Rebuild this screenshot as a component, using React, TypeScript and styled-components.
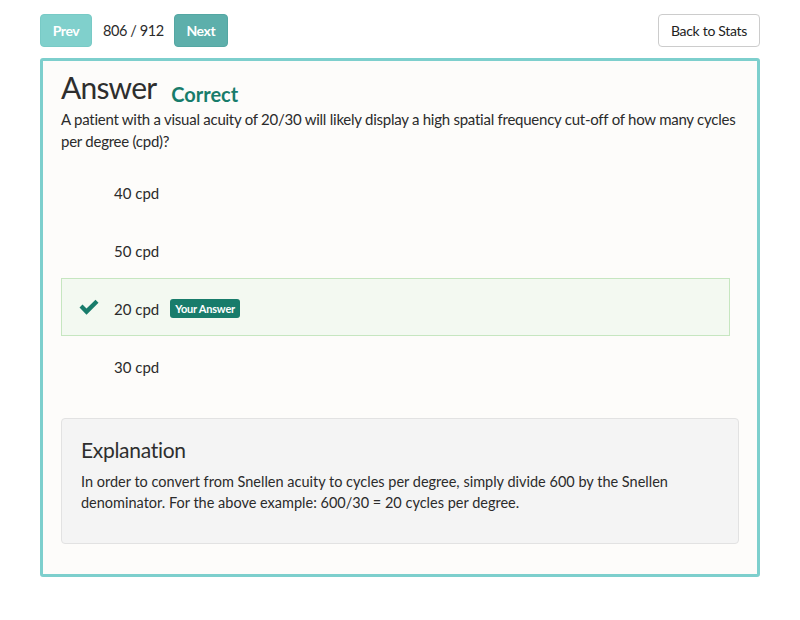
import React from "react";
import styled, { createGlobalStyle } from "styled-components";

const Global = createGlobalStyle`
  html, body { margin: 0; padding: 0; background: #ffffff; }
  body { font-family: Lato, "Open Sans", sans-serif; color: #2b2b2b; }
  * { box-sizing: border-box; }
`;

const Page = styled.div`
  width: 800px;
  padding: 14px 40px 0 40px;
`;

const Toolbar = styled.div`
  display: flex;
  align-items: center;
  height: 33px;
  margin-bottom: 11px;
`;

const NavButton = styled.button<{ $dark?: boolean; $w: number }>`
  width: ${(p) => p.$w}px;
  height: 33px;
  padding: 0;
  border: 1px solid ${(p) => (p.$dark ? "#54a7a3" : "#78cac6")};
  border-radius: 4px;
  background: ${(p) => (p.$dark ? "#5dafab" : "#80d0cc")};
  color: #fff;
  font-family: Lato, sans-serif;
  font-weight: 700;
  font-size: 14px;
  letter-spacing: -0.4px;
`;

const Counter = styled.span`
  font-size: 14.5px;
  letter-spacing: -0.4px;
  margin: 0 10px 0 11px;
  color: #2b2b2b;
`;

const Spacer = styled.div`
  flex: 1;
`;

const BackButton = styled.button`
  width: 102px;
  height: 33px;
  padding: 0;
  border: 1px solid #cccccc;
  border-radius: 4px;
  background: #fff;
  color: #222;
  font-family: Lato, sans-serif;
  font-size: 14px;
  letter-spacing: -0.3px;
`;

const Card = styled.div`
  border: 3px solid #7dcfcd;
  border-radius: 3px;
  background: #fdfcfa;
  padding: 7px 18px 31px 18px;
  height: 519px;
`;

const TitleRow = styled.div`
  display: flex;
  align-items: baseline;
`;

const Title = styled.h1`
  margin: 0;
  font-size: 30px;
  font-weight: 400;
  letter-spacing: -0.8px;
  color: #2e2e2e;
  line-height: 38px;
`;

const Status = styled.span`
  font-size: 20px;
  font-weight: 700;
  color: #187c6b;
  margin-left: 15px;
  position: relative;
  top: 3px;
`;

const Question = styled.p`
  margin: 2px 0 0 0;
  font-size: 15px;
  letter-spacing: -0.25px;
  line-height: 22px;
  color: #2b2b2b;
`;

const Options = styled.div`
  display: flex;
  flex-direction: column;
  margin-top: 10px;
  width: 669px;
`;

const OptionRow = styled.div<{ $selected?: boolean }>`
  display: flex;
  align-items: center;
  height: 58px;
  padding-left: 16px;
  border: 1px solid ${(p) => (p.$selected ? "#c6e6c0" : "transparent")};
  background: ${(p) => (p.$selected ? "#f3f9f1" : "transparent")};
  font-size: 15px;
`;

const IconSlot = styled.div`
  width: 36px;
  display: flex;
  align-items: center;
  color: #187c6b;
`;

const OptionText = styled.span`
  margin-top: 3px;
`;

const Badge = styled.span`
  margin-left: 11px;
  background: #187c6b;
  color: #fff;
  font-size: 11px;
  font-weight: 700;
  padding: 3px 5px;
  border-radius: 3px;
  letter-spacing: -0.2px;
  margin-top: 3px;
`;

const Explanation = styled.div`
  margin-top: 24px;
  background: #f4f4f4;
  border: 1px solid #e2e2e2;
  border-radius: 4px;
  padding: 17px 19px 30px 19px;
  height: 126px;
`;

const ExplTitle = styled.h3`
  margin: 0 0 7px 0;
  font-size: 21px;
  font-weight: 400;
  letter-spacing: -0.3px;
  color: #2e2e2e;
  line-height: 28px;
`;

const ExplText = styled.p`
  margin: 0;
  font-size: 14.5px;
  line-height: 21px;
  color: #2b2b2b;
`;

const Check = () => (
  <svg width="22" height="17" viewBox="0 0 22 17">
    <path d="M1.5 8.5 L4.5 5.5 L8.5 9.5 L17.5 0.8 L20.5 3.8 L8.5 15.8 Z" fill="#187c6b" />
  </svg>
);

const options = [
  { text: "40 cpd" },
  { text: "50 cpd" },
  { text: "20 cpd", selected: true },
  { text: "30 cpd" },
];

export default function App() {
  return (
    <>
      <Global />
      <Page>
        <Toolbar>
          <NavButton $w={52}>Prev</NavButton>
          <Counter>806 / 912</Counter>
          <NavButton $dark $w={54}>Next</NavButton>
          <Spacer />
          <BackButton>Back to Stats</BackButton>
        </Toolbar>
        <Card>
          <TitleRow>
            <Title>Answer</Title>
            <Status>Correct</Status>
          </TitleRow>
          <Question>
            A patient with a visual acuity of 20/30 will likely display a high spatial frequency cut-off of how many cycles
            per degree (cpd)?
          </Question>
          <Options>
            {options.map((o) => (
              <OptionRow key={o.text} $selected={o.selected}>
                <IconSlot>{o.selected && <Check />}</IconSlot>
                <OptionText>{o.text}</OptionText>
                {o.selected && <Badge>Your Answer</Badge>}
              </OptionRow>
            ))}
          </Options>
          <Explanation>
            <ExplTitle>Explanation</ExplTitle>
            <ExplText>
              In order to convert from Snellen acuity to cycles per degree, simply divide 600 by the Snellen
              denominator. For the above example: 600/30 = 20 cycles per degree.
            </ExplText>
          </Explanation>
        </Card>
      </Page>
    </>
  );
}
